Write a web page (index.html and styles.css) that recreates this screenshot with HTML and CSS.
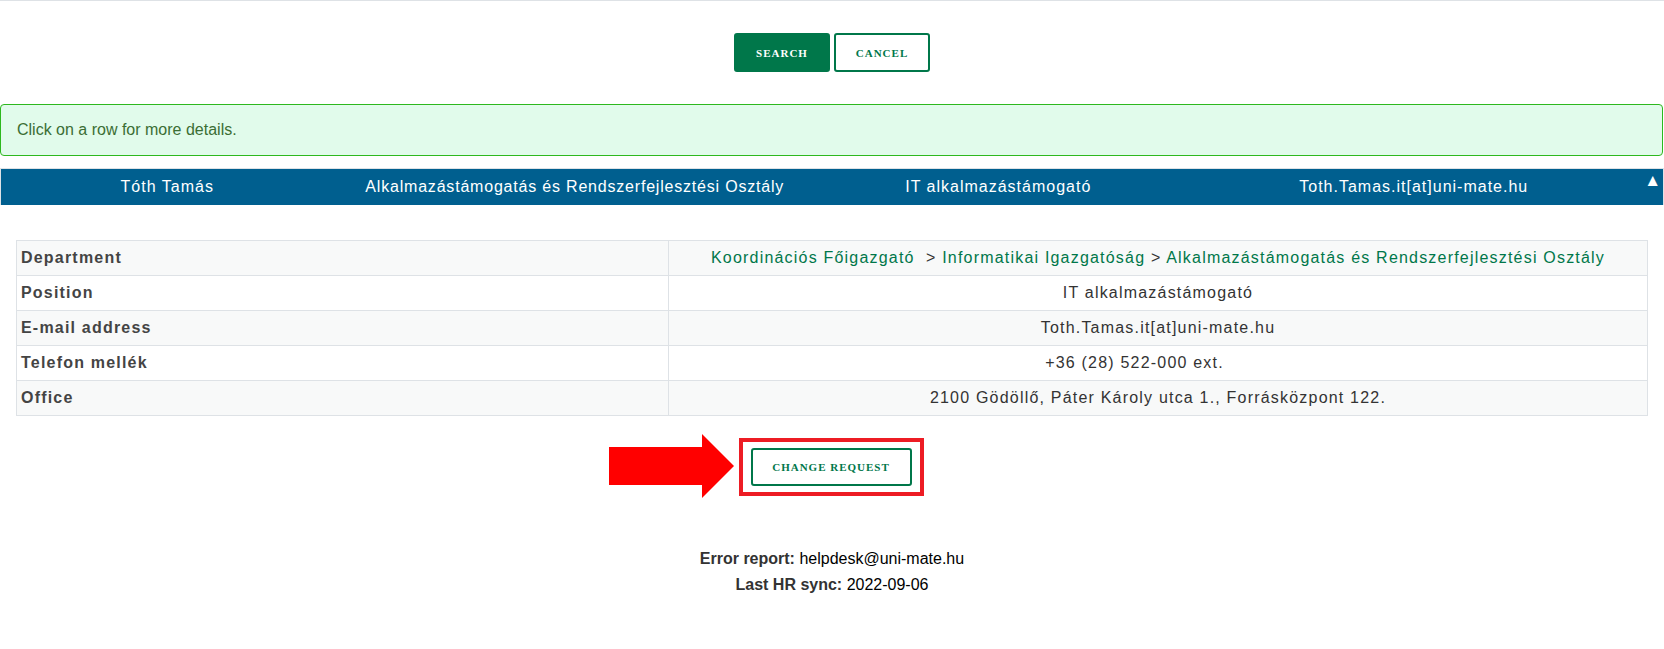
FILE: index.html
```html
<!DOCTYPE html>
<html lang="hu">
<head>
<meta charset="utf-8">
<title>Directory</title>
<link rel="stylesheet" href="styles.css">
</head>
<body>
<div class="page">
  <div class="actions">
    <button class="btn btn-solid" type="button">Search</button>
    <button class="btn btn-outline" type="button">Cancel</button>
  </div>

  <div class="alert">Click on a row for more details.</div>

  <div class="result-bar">
    <div class="result-cell">Tóth Tamás</div>
    <div class="result-cell result-dept">Alkalmazástámogatás és Rendszerfejlesztési Osztály</div>
    <div class="result-cell">IT alkalmazástámogató</div>
    <div class="result-cell">Toth.Tamas.it[at]uni-mate.hu</div>
    <span class="sort-arrow">&#9650;</span>
  </div>

  <table class="details">
    <tr>
      <th>Department</th>
      <td><a class="dep">Koordinációs Főigazgató</a> &nbsp;&gt; <a class="dep">Informatikai Igazgatóság</a> &gt; <a class="dep">Alkalmazástámogatás és Rendszerfejlesztési Osztály</a></td>
    </tr>
    <tr>
      <th>Position</th>
      <td>IT alkalmazástámogató</td>
    </tr>
    <tr>
      <th>E-mail address</th>
      <td>Toth.Tamas.it[at]uni-mate.hu</td>
    </tr>
    <tr>
      <th>Telefon mellék</th>
      <td>+36 (28) 522-000 ext.<span class="ext-gap"></span></td>
    </tr>
    <tr>
      <th>Office</th>
      <td>2100 Gödöllő, Páter Károly utca 1., Forrásközpont 122.</td>
    </tr>
  </table>

  <div class="change-row">
    <div class="change-wrap">
      <div class="arrow">
        <div class="arrow-shaft"></div>
        <div class="arrow-head"></div>
      </div>
      <div class="highlight">
        <button class="btn btn-outline btn-change" type="button">Change request</button>
      </div>
    </div>
  </div>

  <footer class="footer">
    <div><b>Error report:</b> helpdesk@uni-mate.hu</div>
    <div><b>Last HR sync:</b> 2022-09-06</div>
  </footer>
</div>
</body>
</html>
```

FILE: styles.css
```css
* { box-sizing: border-box; }

html, body {
  margin: 0;
  padding: 0;
  background: #ffffff;
}

body {
  font-family: "Liberation Sans", Arial, sans-serif;
  color: #333333;
  border-top: 1px solid #dee2e6;
}

.page {
  width: 100%;
}

.actions {
  display: flex;
  justify-content: center;
  gap: 4px;
  padding-top: 32px;
}

.btn {
  font-family: "Liberation Serif", "Times New Roman", serif;
  font-weight: bold;
  font-size: 11px;
  letter-spacing: 1px;
  text-transform: uppercase;
  height: 39px;
  width: 96px;
  border-radius: 3px;
  cursor: pointer;
  padding: 0;
}

.btn-solid {
  background: #00774a;
  border: 2px solid #00774a;
  color: #ffffff;
}

.btn-outline {
  background: #ffffff;
  border: 2px solid #00774a;
  color: #00774a;
}

.alert {
  margin-top: 32px;
  height: 52px;
  border: 1px solid #2db81e;
  border-radius: 4px;
  background: #e1fbeb;
  color: #3b6e34;
  font-size: 16px;
  padding: 0 16px;
  display: flex;
  align-items: center;
  margin-right: 1px;
}

.result-bar {
  position: relative;
  margin-top: 12px;
  border-top: 1px solid #dee2e6;
  border-left: 1px solid #dee2e6;
  border-right: 1px solid #dee2e6;
  display: grid;
  grid-template-columns: repeat(4, minmax(0, 1fr));
  background: #005f8f;
}

.result-cell {
  color: #ffffff;
  font-size: 16px;
  letter-spacing: 1px;
  height: 36px;
  line-height: 36px;
  padding-right: 83px;
  text-align: center;
  white-space: nowrap;
  overflow: visible;
}

.result-dept {
  letter-spacing: 0.8px;
  padding-right: 0;
  margin-left: -53px;
  margin-right: 46px;
}

.sort-arrow {
  position: absolute;
  right: 2px;
  top: 2px;
  color: #ffffff;
  font-size: 17px;
  line-height: 20px;
}

.details {
  margin: 35px 16px 0 16px;
  width: calc(100% - 32px);
  border-collapse: collapse;
  font-size: 16px;
  letter-spacing: 1.2px;
}

.details tr:nth-child(odd) {
  background: #f8f9f9;
}

.details th,
.details td {
  border: 1px solid #dee2e6;
  height: 35px;
  padding: 0 4px;
}

.details th {
  width: 652px;
  text-align: left;
  font-weight: bold;
  color: #444444;
}

.details td {
  text-align: center;
  color: #333333;
}

.dep {
  color: #00774a;
  text-decoration: none;
}

.ext-gap {
  display: inline-block;
  width: 47px;
}

.change-row {
  display: flex;
  justify-content: center;
  margin-top: 22px;
}

.change-wrap {
  position: relative;
}

.highlight {
  border: 4px solid #ed1c24;
  padding: 6px 8px;
  margin-right: 2px;
}

.btn-change {
  width: 161px;
  height: 38px;
}

.arrow {
  position: absolute;
  right: 100%;
  margin-right: 5px;
  top: -4px;
  display: flex;
  align-items: center;
  height: 64px;
}

.arrow-shaft {
  width: 93px;
  height: 38px;
  background: #ff0000;
}

.arrow-head {
  width: 0;
  height: 0;
  border-top: 32px solid transparent;
  border-bottom: 32px solid transparent;
  border-left: 32px solid #ff0000;
}

.footer {
  margin-top: 50px;
  text-align: center;
  font-size: 16px;
  line-height: 26px;
  color: #000000;
}

.footer b {
  color: #333333;
}
```
